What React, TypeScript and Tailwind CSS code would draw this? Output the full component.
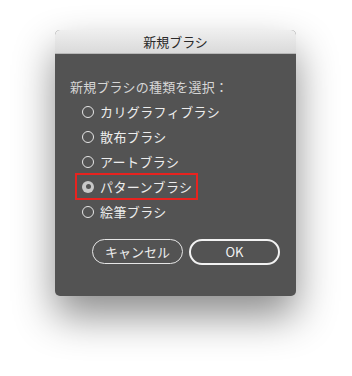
import React from "react";

const font = { fontFamily: '"Noto Sans CJK JP", "Noto Sans", sans-serif' };

function Radio({ checked }: { checked?: boolean }) {
  return checked ? (
    <span className="w-[12px] h-[12px] rounded-full bg-[#c8c8c8] flex items-center justify-center shrink-0">
      <span className="w-[5px] h-[5px] rounded-full bg-[#555555]" />
    </span>
  ) : (
    <span className="w-[12px] h-[12px] rounded-full border border-[#e6e6e6] shrink-0" />
  );
}

export default function App() {
  const items = ["カリグラフィブラシ", "散布ブラシ", "アートブラシ", "パターンブラシ", "絵筆ブラシ"];
  return (
    <div className="w-[352px] h-[376px] bg-white pt-[30px] pl-[55px]" style={font}>
      <div className="w-[241px] h-[266px] rounded-[5px] overflow-hidden bg-[#535353] shadow-[0_20px_40px_rgba(0,0,0,0.45)] flex flex-col">
        <div className="h-[24px] shrink-0 bg-gradient-to-b from-[#efefef] to-[#dadada] border-b border-[#b8b8b8] flex items-center justify-center text-[13px] text-[#2a2a2a]">
          新規ブラシ
        </div>
        <div className="pl-[15px] pt-[25px] text-[13px] text-[#d6d6d6] leading-[16px] tracking-[0.2px]">新規ブラシの種類を選択：</div>
        <div className="pl-[21px] pt-[4px] flex flex-col">
          {items.map((t, i) => (
            <div
              key={t}
              className={
                "h-[25px] flex items-center gap-[6px] pl-[6px] text-[13px] text-[#ededed] tracking-[0.4px] " +
                (i === 3 ? "outline outline-2 outline-[#e8231f] -outline-offset-1 w-[121px]" : "")
              }
            >
              <Radio checked={i === 3} />
              <span>{t}</span>
            </div>
          ))}
        </div>
        <div className="flex gap-[6px] pl-[37px] pt-[15px]">
          <div className="w-[91px] h-[25px] rounded-full border border-[#e6e6e6] flex items-center justify-center text-[13px] text-[#ededed]">
            キャンセル
          </div>
          <div className="w-[91px] h-[26px] rounded-full border-2 border-[#f2f2f2] flex items-center justify-center text-[13px] text-[#f2f2f2]">
            OK
          </div>
        </div>
      </div>
    </div>
  );
}
